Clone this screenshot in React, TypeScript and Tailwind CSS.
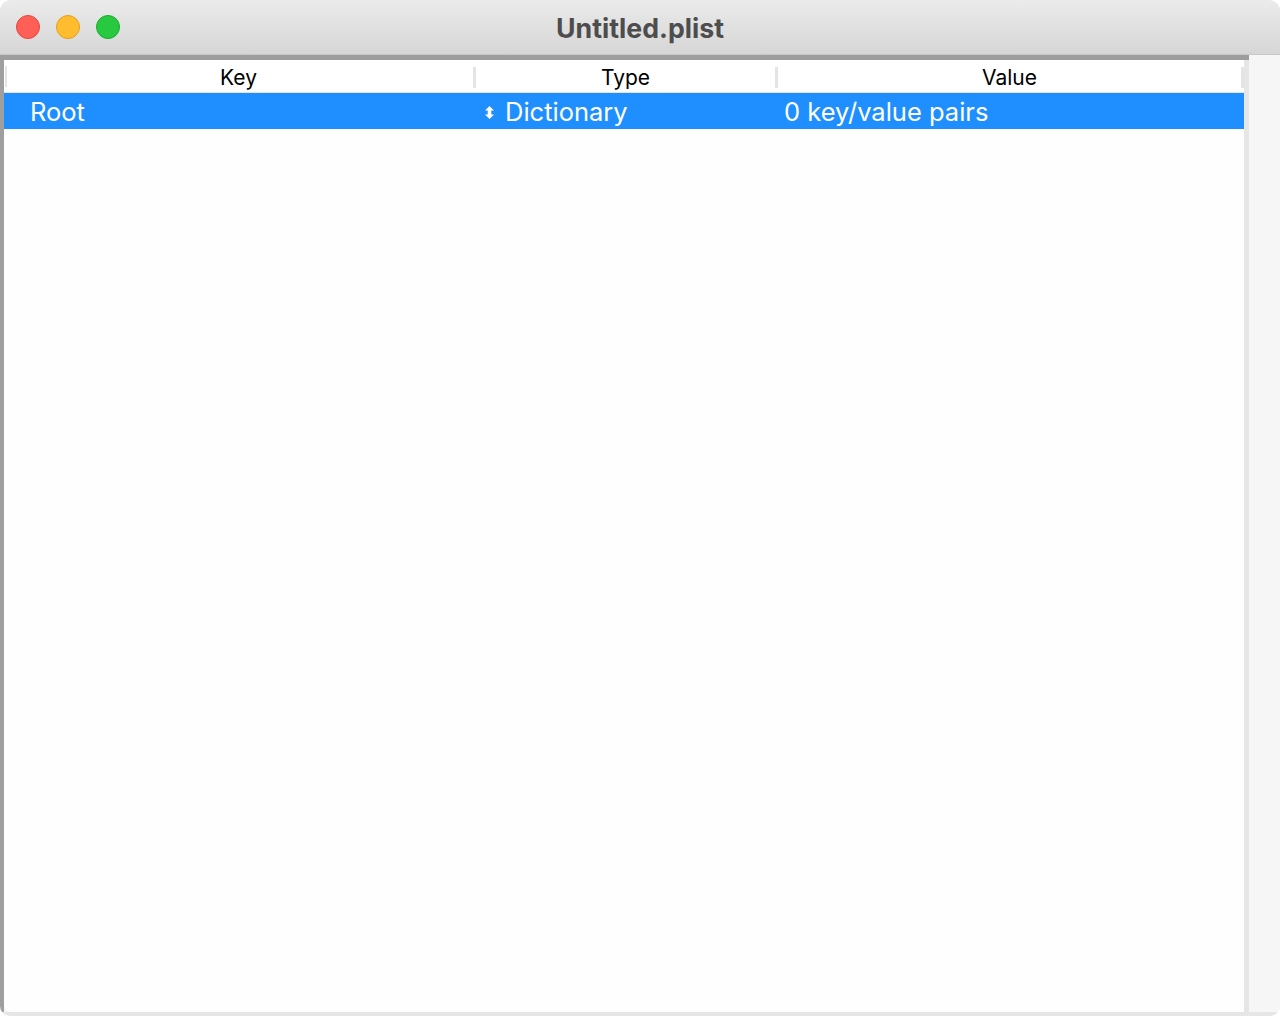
import React from 'react';

const font = { fontFamily: 'Inter, "Noto Sans", "Liberation Sans", sans-serif' };

function TrafficLights() {
  return (
    <div className="flex items-center gap-[16px] pl-[16px]">
      <span className="block h-[24px] w-[24px] rounded-full border border-[#e2463f] bg-[#ff5f57]" />
      <span className="block h-[24px] w-[24px] rounded-full border border-[#e1a116] bg-[#febc2e]" />
      <span className="block h-[24px] w-[24px] rounded-full border border-[#14ae2a] bg-[#28c840]" />
    </div>
  );
}

function UpDown() {
  return (
    <svg width="11" height="15" viewBox="0 0 11 15" className="mr-[10px] block shrink-0">
      <path d="M5.5 1 L10 5.5 H7.3 V9.5 H10 L5.5 14 L1 9.5 H3.7 V5.5 H1 Z" fill="white" />
    </svg>
  );
}

export default function App() {
  return (
    <div className="h-[1016px] w-[1280px] overflow-hidden bg-white" style={font}>
      <div className="flex h-full w-full flex-col overflow-hidden rounded-t-[11px] rounded-b-[10px] bg-[#f7f7f7]">
        {/* title bar */}
        <div className="relative flex h-[55px] shrink-0 items-center border-b border-[#c8c8c8] bg-gradient-to-b from-[#ebebeb] to-[#d6d6d6]">
          <TrafficLights />
          <div className="absolute inset-0 flex items-center justify-center pt-[2px] text-[26.7px] font-bold text-[#4d4d4d]">
            Untitled.plist
          </div>
        </div>

        <div className="flex flex-1">
          {/* outline view */}
          <div className="flex w-[1249px] flex-col">
            <div className="h-[5px] bg-[#9d9d9d]" />
            <div className="flex flex-1">
              <div className="w-[4px] bg-[#9f9f9f]" />
              <div className="flex flex-1 flex-col overflow-hidden rounded-bl-[8px] bg-[#fefefe]">
                {/* header */}
                <div className="flex h-[33px] items-center border-b border-[#e4e4e4] bg-white pt-[3px] text-[21px] text-black">
                  <div className="relative flex h-full w-[469px] items-center justify-center">
                    <span className="absolute left-[1px] top-[3px] h-[21px] w-[2px] bg-[#e4e4e4]" />
                    Key
                  </div>
                  <span className="h-[21px] w-[3px] bg-[#e4e4e4]" />
                  <div className="flex h-full w-[299px] items-center justify-center">Type</div>
                  <span className="h-[21px] w-[3px] bg-[#e4e4e4]" />
                  <div className="flex h-full flex-1 items-center justify-center">Value</div>
                  <span className="h-[21px] w-[3px] bg-[#e4e4e4]" />
                </div>
                {/* root row */}
                <div className="flex h-[36px] items-center bg-[#1f8fff] pt-[3px] text-[25.5px] text-white">
                  <div className="w-[472px] pl-[26px]">Root</div>
                  <div className="flex w-[300px] items-center pl-[8px]">
                    <UpDown />
                    Dictionary
                  </div>
                  <div className="flex-1 pl-[8px]">0 key/value pairs</div>
                </div>
                <div className="flex-1" />
              </div>
              <div className="w-[5px] bg-[#e6e6e6]" />
            </div>
          </div>
          {/* right pane */}
          <div className="flex-1 bg-[#f6f6f6]" />
        </div>

        <div className="h-[4px] shrink-0 bg-[#e6e6e6]" />
      </div>
    </div>
  );
}
